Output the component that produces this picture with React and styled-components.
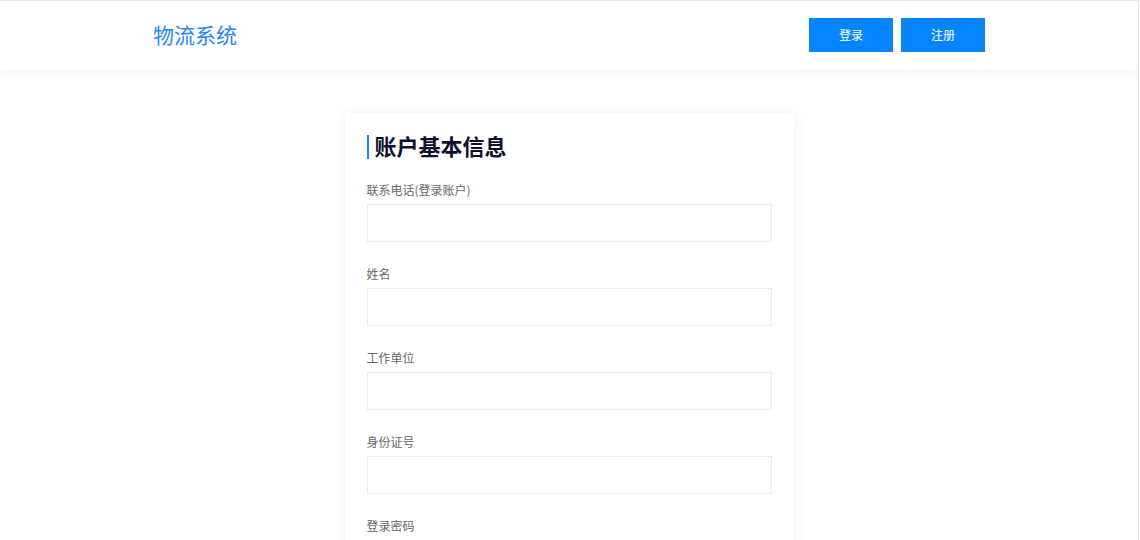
import React from 'react';
import styled, { createGlobalStyle } from 'styled-components';

const GlobalStyle = createGlobalStyle`
  html, body {
    margin: 0;
    padding: 0;
    background: #ffffff;
    font-family: "Noto Sans CJK SC", "Noto Sans", sans-serif;
  }
`;

const Page = styled.div`
  width: 1139px;
  height: 540px;
  overflow: hidden;
  border-top: 1px solid #e6e6e6;
  border-right: 1px solid #e3e3e3;
  box-sizing: border-box;
  background: #ffffff;
`;

const Header = styled.header`
  height: 69px;
  background: #ffffff;
  box-shadow: 0 4px 12px rgba(0, 0, 0, 0.05);
  position: relative;
  z-index: 1;
`;

const HeaderInner = styled.div`
  width: 832px;
  height: 100%;
  margin: 0 auto;
  display: flex;
  align-items: center;
  justify-content: space-between;
`;

const Brand = styled.div`
  font-size: 21px;
  line-height: 24px;
  margin-top: -4px;
  color: #2a86f2;
`;

const Actions = styled.div`
  display: flex;
  gap: 8px;
  margin-top: -2px;
`;

const NavButton = styled.button`
  width: 84px;
  height: 34px;
  border: none;
  background: #0785ff;
  color: #ffffff;
  font-family: inherit;
  font-size: 12px;
  cursor: pointer;
`;

const Main = styled.main`
  display: flex;
  justify-content: center;
  padding-top: 43px;
`;

const Card = styled.section`
  width: 449px;
  box-sizing: border-box;
  padding: 22px 22px 40px;
  background: #ffffff;
  box-shadow: 0 0 14px rgba(0, 0, 0, 0.07);
`;

const Heading = styled.h2`
  margin: 0 0 23px;
  height: 24px;
  line-height: 21px;
  padding-left: 6px;
  border-left: 2px solid #1a88f0;
  font-size: 22px;
  font-weight: 700;
  color: #0f0f2e;
`;

const Field = styled.div`
  margin-bottom: 24px;
`;

const Label = styled.label`
  display: block;
  height: 16px;
  line-height: 16px;
  margin-bottom: 6px;
  font-size: 12px;
  color: #6b6565;
`;

const Input = styled.input`
  display: block;
  width: 100%;
  height: 38px;
  box-sizing: border-box;
  border: 1px solid #ececec;
  outline: none;
  padding: 0 10px;
  font-family: inherit;
  font-size: 13px;
`;

const fields = ['联系电话(登录账户)', '姓名', '工作单位', '身份证号', '登录密码'];

export default function App() {
  return (
    <Page>
      <GlobalStyle />
      <Header>
        <HeaderInner>
          <Brand>物流系统</Brand>
          <Actions>
            <NavButton>登录</NavButton>
            <NavButton>注册</NavButton>
          </Actions>
        </HeaderInner>
      </Header>
      <Main>
        <Card>
          <Heading>账户基本信息</Heading>
          {fields.map(label => (
            <Field key={label}>
              <Label>{label}</Label>
              <Input type={label === '登录密码' ? 'password' : 'text'} />
            </Field>
          ))}
        </Card>
      </Main>
    </Page>
  );
}
